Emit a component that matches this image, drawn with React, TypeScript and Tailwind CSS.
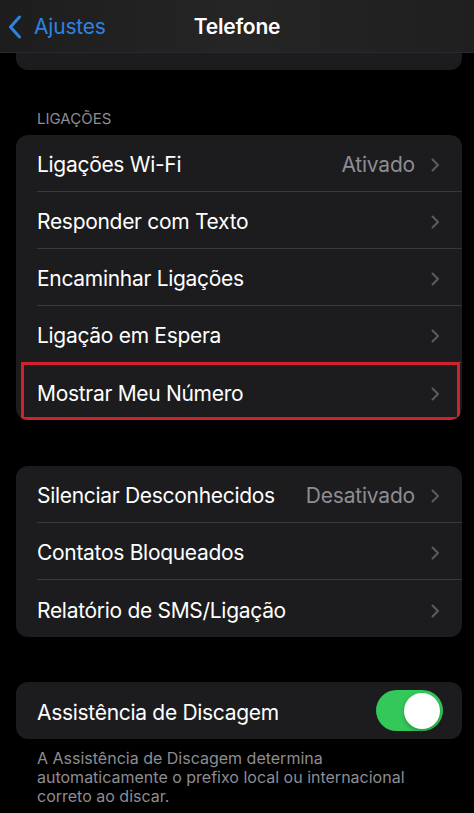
import { type ReactNode } from 'react';

const font = { fontFamily: 'Inter, "Noto Sans", sans-serif' };

function Chevron() {
  return (
    <svg width="9" height="14" viewBox="0 0 9 14" fill="none" className="shrink-0">
      <path d="M1.5 1.5L7 7L1.5 12.5" stroke="#5b5b60" strokeWidth="2" strokeLinecap="round" strokeLinejoin="round" />
    </svg>
  );
}

function Row({
  label,
  value,
  last,
  children
}: {
  label: string;
  value?: string;
  last?: boolean;
  children?: ReactNode;
}) {
  return (
    <div className="relative flex h-[57px] items-center pl-[21px]">
      <div
        className={`flex h-full flex-1 items-center pt-[4px] pr-[22px] ${
          last ? '' : 'border-b border-[#38383a]'
        }`}
      >
        <span className="flex-1 text-[21px] tracking-[-0.3px] text-white">{label}</span>
        {value && <span className="mr-[16px] text-[21px] tracking-[-0.2px] text-[#8d8d92]">{value}</span>}
        <Chevron />
      </div>
      {children}
    </div>
  );
}

export default function App() {
  return (
    <div className="min-h-[813px] w-full overflow-hidden bg-black" style={font}>
      <header className="flex h-[53px] items-center border-b border-[#2a2a2c] bg-[linear-gradient(to_right,#1d1d1e,#252526,#1f1f20)] pt-[2px]">
        <div className="flex w-[140px] items-center pl-[8px]">
          <svg width="14" height="24" viewBox="0 0 14 24" fill="none">
            <path d="M11.5 2L2.5 12L11.5 22" stroke="#2d83e0" strokeWidth="3" strokeLinecap="round" strokeLinejoin="round" />
          </svg>
          <span className="ml-[12px] text-[21px] tracking-[-0.2px] text-[#2d83e0]">Ajustes</span>
        </div>
        <h1 className="flex-1 pr-[140px] text-center text-[21px] font-semibold tracking-[-0.2px] text-white">
          Telefone
        </h1>
      </header>

      <div className="ml-4 mr-[12px] h-[17px] rounded-b-[12px] bg-[#1c1c1e]" />

      <div className="mt-[40px] pb-[7px] pl-[37px] text-[15px] leading-[18px] text-[#8d8d92]">LIGAÇÕES</div>

      <div className="ml-4 mr-[12px] overflow-hidden rounded-[12px] bg-[#1c1c1e]">
        <Row label="Ligações Wi-Fi" value="Ativado" />
        <Row label="Responder com Texto" />
        <Row label="Encaminhar Ligações" />
        <Row label="Ligação em Espera" />
        <Row label="Mostrar Meu Número" last>
          <div className="pointer-events-none absolute bottom-0 left-[5px] right-[2px] top-[-1px] border-[3px] border-[#d2202e]" />
        </Row>
      </div>

      <div className="ml-4 mr-[12px] mt-[46px] overflow-hidden rounded-[12px] bg-[#1c1c1e]">
        <Row label="Silenciar Desconhecidos" value="Desativado" />
        <Row label="Contatos Bloqueados" />
        <Row label="Relatório de SMS/Ligação" last />
      </div>

      <div className="ml-4 mr-[12px] mt-[45px] flex h-[57px] items-center rounded-[12px] bg-[#1c1c1e] pl-[21px] pr-[19px]">
        <span className="flex-1 pt-[4px] text-[21px] tracking-[-0.3px] text-white">Assistência de Discagem</span>
        <div className="flex h-[41px] w-[67px] items-center justify-end rounded-full bg-[#34c759] px-[3px]">
          <div className="h-[36px] w-[36px] rounded-full bg-white shadow-[0_2px_4px_rgba(0,0,0,0.25)]" />
        </div>
      </div>

      <p className="mt-[10px] pl-[37px] pr-[30px] text-[16px] leading-[19px] text-[#8d8d92]">
        A Assistência de Discagem determina automaticamente o prefixo local ou internacional correto ao discar.
      </p>
    </div>
  );
}
